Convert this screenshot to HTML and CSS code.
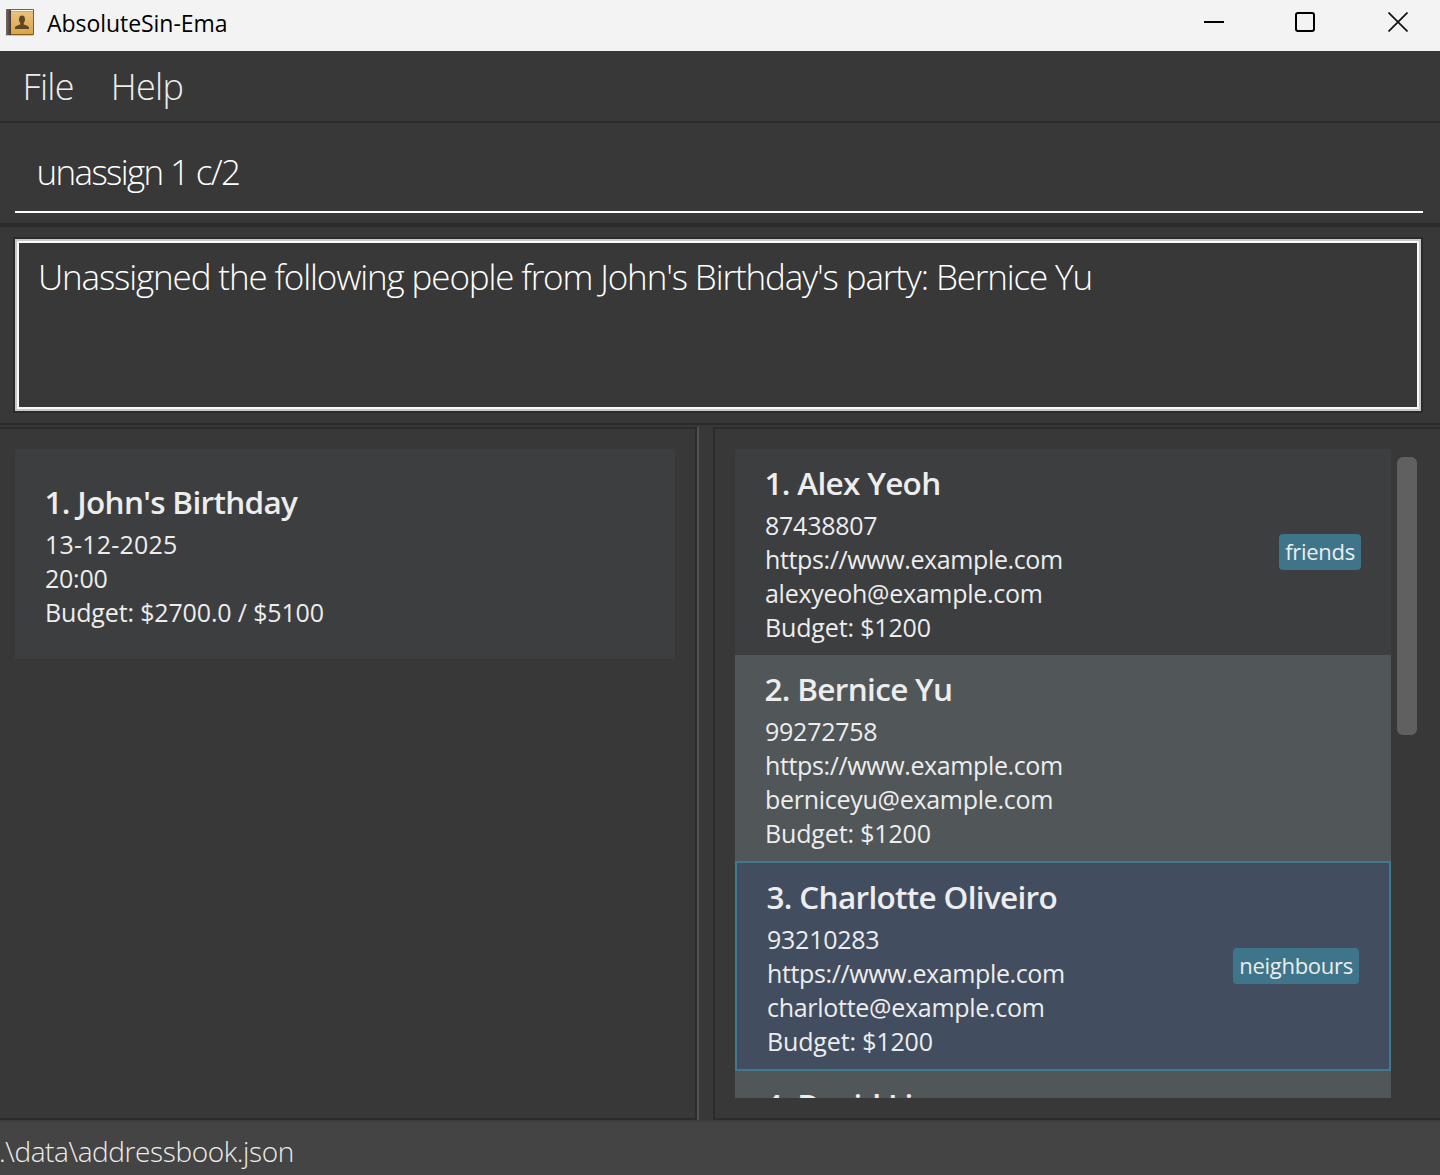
FILE: index.html
```html
<!DOCTYPE html>
<html lang="en">
<head>
<meta charset="utf-8">
<title>AbsoluteSin-Ema</title>
<link rel="stylesheet" href="styles.css">
</head>
<body>
<div class="window">
  <header class="titlebar">
    <svg class="app-icon" width="30" height="30" viewBox="0 0 30 30">
      <defs>
        <linearGradient id="cover" x1="0" y1="0" x2="0" y2="1">
          <stop offset="0" stop-color="#e8c27c"/>
          <stop offset="1" stop-color="#dba548"/>
        </linearGradient>
        <linearGradient id="spine" x1="0" y1="0" x2="1" y2="0">
          <stop offset="0" stop-color="#79675c"/>
          <stop offset="1" stop-color="#40383a"/>
        </linearGradient>
      </defs>
      <rect x="0.5" y="26" width="28" height="2" rx="1" fill="#c9c5bf"/>
      <rect x="1" y="1" width="28" height="26" rx="1" fill="#8b5a1c"/>
      <rect x="4" y="2" width="24" height="1.5" fill="#fff8e8"/>
      <rect x="5" y="4" width="23" height="22" fill="url(#cover)"/>
      <rect x="1" y="2" width="5" height="25" fill="url(#spine)"/>
      <path d="M17 7.500c-2 0-3 1.500-3 3.700 0 1.800.6 2.900 1.300 3.700v1.600c-1.500.8-5.300 1.200-5.300 3.500V21h14v-1c0-2.300-3.800-2.700-5.300-3.500v-1.600c.7-.8 1.300-1.900 1.300-3.700 0-2.200-1-3.700-3-3.700z" fill="#5e4526"/>
    </svg>
    <h1 class="app-name">AbsoluteSin-Ema</h1>
    <div class="controls">
      <svg width="20" height="20" viewBox="0 0 20 20"><path d="M0 10h20" stroke="#000" stroke-width="2"/></svg>
      <svg width="20" height="20" viewBox="0 0 20 20"><rect x="1" y="1" width="18" height="18" rx="2" fill="none" stroke="#000" stroke-width="2"/></svg>
      <svg width="20" height="20" viewBox="0 0 20 20"><path d="M.5.5l19 19M19.500.5l-19 19" stroke="#111" stroke-width="1.700"/></svg>
    </div>
  </header>

  <nav class="menubar"><span>File</span><span>Help</span></nav>

  <section class="command"><div class="command-field">unassign 1 c/2</div></section>

  <section class="result">
    <div class="result-box">Unassigned the following people from John's Birthday's party: Bernice Yu</div>
  </section>

  <main class="panels">
    <section class="events">
      <article class="row event">
        <div>
          <h2>1. John's Birthday</h2>
          <p class="date">13-12-2025</p><p>20:00</p><p class="budget">Budget: $2700.0 / $5100</p>
        </div>
      </article>
    </section>
    <div class="divider"></div>
    <section class="people">
      <div class="people-list">
        <article class="row">
          <div>
            <h2>1. Alex Yeoh</h2>
            <p>87438807</p><p class="link">https://www.example.com</p><p class="email">alexyeoh@example.com</p><p class="budget">Budget: $1200</p>
          </div>
          <span class="tag">friends</span>
        </article>
        <article class="row alt">
          <div>
            <h2>2. Bernice Yu</h2>
            <p>99272758</p><p class="link">https://www.example.com</p><p class="email">berniceyu@example.com</p><p class="budget">Budget: $1200</p>
          </div>
        </article>
        <article class="row selected">
          <div>
            <h2>3. Charlotte Oliveiro</h2>
            <p>93210283</p><p class="link">https://www.example.com</p><p class="email">charlotte@example.com</p><p class="budget">Budget: $1200</p>
          </div>
          <span class="tag">neighbours</span>
        </article>
        <article class="row alt">
          <div><h2>4. David Li</h2></div>
        </article>
      </div>
      <div class="scroll-thumb"></div>
    </section>
  </main>

  <footer class="statusbar">.\data\addressbook.json</footer>
</div>
</body>
</html>
```
FILE: styles.css
```css
* { box-sizing: border-box; margin: 0; padding: 0; }

body {
  background: #383838;
  color: #ededed;
  font-family: "Open Sans", "Noto Sans", sans-serif;
}

.window {
  width: 1440px;
  height: 1175px;
  display: flex;
  flex-direction: column;
  overflow: hidden;
  white-space: nowrap;
}

.titlebar {
  height: 51px;
  flex: none;
  display: flex;
  align-items: flex-start;
  padding: 8px 32px 0 5px;
  background: #f3f3f3;
  color: #000;
}
.app-icon { display: block; }
.app-name {
  margin-left: 12px;
  font-size: 23px;
  font-weight: 400;
  letter-spacing: -0.05px;
  line-height: 31px;
}
.controls {
  display: flex;
  gap: 72px;
  margin-left: auto;
  padding-top: 4px;
}
.controls svg { display: block; }
.controls svg:nth-child(2) { margin-right: 1px; margin-left: -1px; }

.menubar {
  height: 72px;
  flex: none;
  display: flex;
  gap: 37px;
  padding-left: 22.5px;
  border-bottom: 2px solid #2b2b2b;
  font-size: 36px;
  font-weight: 300;
  letter-spacing: -0.7px;
  line-height: 71px;
}

.command {
  height: 104px;
  flex: none;
  padding: 0 17px 0 15px;
  border-bottom: 4px solid #2b2b2b;
}
.command-field {
  height: 90px;
  padding-left: 21.5px;
  border-bottom: 2px solid #fff;
  color: #fff;
  font-size: 35px;
  font-weight: 300;
  letter-spacing: -1.65px;
  line-height: 98px;
}

.result {
  height: 198px;
  flex: none;
  padding: 10px 17px 0 13px;
  border-bottom: 2px solid #2b2b2b;
}
.result-box {
  height: 176px;
  padding: 0 23px;
  border: 2px solid #2b2b2b;
  outline: 2px solid #c8c8c8;
  outline-offset: -4px;
  box-shadow: inset 0 0 0 4px #fafafa;
  color: #fff;
  font-size: 35px;
  font-weight: 300;
  letter-spacing: -1.14px;
  line-height: 76px;
}

.panels {
  height: 695px;
  flex: none;
  display: flex;
  padding-top: 2px;
}
.events {
  width: 697px;
  padding: 20px 20px 0 15px;
  border: 2px solid #2b2b2b;
  border-left: 0;
}
.divider {
  width: 16px;
  border-left: 2px solid #525252;
}
.people {
  flex: 1;
  display: flex;
  gap: 6px;
  padding: 20px 0 20px 20px;
  border: 2px solid #2b2b2b;
  border-right: 0;
}
.people-list { width: 656px; overflow: hidden; }
.scroll-thumb {
  width: 20px;
  height: 278px;
  margin-top: 8px;
  border-radius: 6px;
  background: #606060;
}

.row {
  display: flex;
  align-items: center;
  justify-content: space-between;
  padding: 11px 30px;
  background: #3c3e3f;
}
.row.event { padding: 30px; }
.row.alt { background: #515658; }
.row.selected { background: #424d5f; border: 2px solid #3e7b91; }
.row h2 {
  margin-bottom: 2px;
  font-size: 31.5px;
  font-weight: 600;
  letter-spacing: -0.68px;
  line-height: 46px;
  text-indent: -0.5px;
}
.row p {
  font-size: 25px;
  letter-spacing: -0.25px;
  line-height: 34px;
}
.row .date { letter-spacing: 0.2px; }
.row .link { letter-spacing: -0.38px; }
.row .email { letter-spacing: -0.28px; }
.row .budget { letter-spacing: -0.15px; }

.tag {
  height: 36px;
  padding: 0 6px;
  border-radius: 4px;
  background: #3f758a;
  font-size: 22px;
  font-weight: 500;
  letter-spacing: -0.27px;
  line-height: 34px;
}

.statusbar {
  flex: 1;
  border-top: 2px solid #3c3c3c;
  background: #444;
  font-size: 28px;
  font-weight: 300;
  letter-spacing: -0.4px;
  line-height: 59px;
  text-indent: -1px;
}
```
